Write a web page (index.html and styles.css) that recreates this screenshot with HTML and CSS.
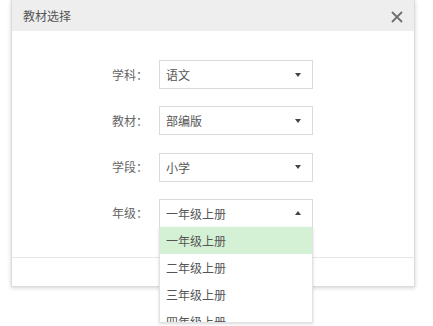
FILE: index.html
```html
<!DOCTYPE html>
<html lang="zh">
<head>
<meta charset="utf-8">
<link rel="stylesheet" href="styles.css">
</head>
<body>
<div class="page">
<div class="dialog">
  <div class="dialog-header">
    <span class="dialog-title">教材选择</span>
    <svg class="close" width="12" height="12" viewBox="0 0 12 12"><path d="M1 1L11 11M11 1L1 11" stroke="#6f6f6f" stroke-width="1.8" fill="none"/></svg>
  </div>
  <div class="dialog-body">
    <div class="row">
      <span class="label">学科：</span>
      <div class="select"><span>语文</span><i class="arrow down"></i></div>
    </div>
    <div class="row">
      <span class="label">教材：</span>
      <div class="select"><span>部编版</span><i class="arrow down"></i></div>
    </div>
    <div class="row">
      <span class="label">学段：</span>
      <div class="select"><span>小学</span><i class="arrow down"></i></div>
    </div>
    <div class="row">
      <span class="label">年级：</span>
      <div class="select open"><span>一年级上册</span><i class="arrow up"></i>
        <ul class="options">
          <li class="active">一年级上册</li>
          <li>二年级上册</li>
          <li>三年级上册</li>
          <li>四年级上册</li>
        </ul>
      </div>
    </div>
  </div>
  <div class="dialog-footer"></div>
</div>
</div>
</body>
</html>
```
FILE: styles.css
```css
html, body {
  margin: 0;
  padding: 0;
  background: #ffffff;
  font-family: "Noto Sans CJK SC", "Microsoft YaHei", sans-serif;
}
.page {
  min-height: 326px;
  overflow: hidden;
}
.dialog {
  margin-left: 11px;
  width: 402px;
  border: 1px solid #dcdcdc;
  border-top: none;
  background: #fff;
  box-shadow: 0 1px 4px rgba(0, 0, 0, 0.18);
}
.dialog-header {
  height: 31px;
  background: #eeeeee;
  display: flex;
  align-items: center;
  justify-content: space-between;
  padding: 0 11px 0 11px;
}
.dialog-title {
  font-size: 12px;
  color: #555;
  line-height: 1;
}
.close {
  display: block;
  margin-top: 2px;
}
.dialog-body {
  padding: 29px 0 29px 76px;
  display: flex;
  flex-direction: column;
  gap: 17.33px;
  border-bottom: 1px solid #e6e6e6;
}
.row {
  display: flex;
  align-items: center;
}
.label {
  width: 60px;
  text-align: right;
  font-size: 12px;
  color: #666;
  margin-right: 11px;
  line-height: 1;
}
.select {
  position: relative;
  box-sizing: border-box;
  width: 154px;
  height: 29px;
  border: 1px solid #dadada;
  display: flex;
  align-items: center;
  justify-content: space-between;
  padding: 0 11px 0 6px;
  font-size: 12px;
  color: #555;
}
.arrow {
  width: 0;
  height: 0;
  border-left: 3px solid transparent;
  border-right: 3px solid transparent;
}
.arrow.down { border-top: 4px solid #444; }
.arrow.up { border-bottom: 4px solid #444; }
.options {
  position: absolute;
  left: -1px;
  top: 27px;
  width: 154px;
  box-sizing: border-box;
  height: 96px;
  overflow: hidden;
  margin: 0;
  padding: 0;
  list-style: none;
  background: #fff;
  border: 1px solid #e2e2e2;
  border-top: none;
  box-shadow: 0 1px 3px rgba(0, 0, 0, 0.15);
  z-index: 2;
}
.options li {
  height: 27px;
  line-height: 27px;
  padding-left: 6px;
  font-size: 12px;
  color: #555;
}
.options li.active {
  background: #d5f1d5;
}
.dialog-footer {
  height: 28px;
}
```
